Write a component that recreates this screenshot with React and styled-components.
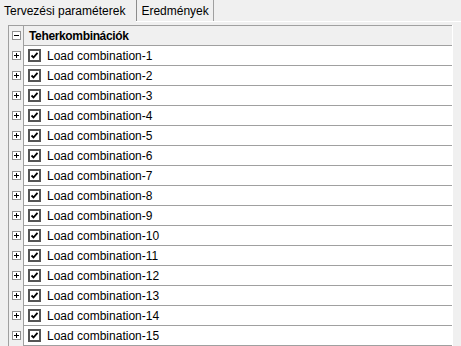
import React from "react";
import styled, { createGlobalStyle } from "styled-components";

const GlobalStyle = createGlobalStyle`
  html, body {
    margin: 0;
    padding: 0;
    overflow: hidden;
    background: #f0f0f0;
  }
  body {
    font-family: "Liberation Sans", Arial, sans-serif;
    font-size: 12px;
    color: #000;
  }
`;

const Window = styled.div`
  width: 461px;
  height: 346px;
  display: flex;
  flex-direction: column;
  background: #f0f0f0;
`;

const TabStrip = styled.div`
  display: flex;
  height: 21px;
  border-bottom: 1px solid #ffffff;
`;

const Tab = styled.div`
  box-sizing: border-box;
  height: ${(p) => (p.$active ? "22px" : "21px")};
  padding: 0 ${(p) => (p.$active ? "11px" : "4px")} 0 4px;
  display: flex;
  align-items: center;
  background: #f0f0f0;
  border-left: ${(p) => (p.$active ? "none" : "1px solid #8c8c8c")};
  border-right: ${(p) => (p.$active ? "none" : "1px solid #a0a0a0")};
  white-space: nowrap;
`;

const Panel = styled.div`
  flex: 1;
  display: flex;
  padding: 3px 8px 0 8px;
  min-height: 0;
`;

const Tree = styled.div`
  flex: 1;
  display: flex;
  flex-direction: column;
  border-left: 1px solid #a0a0a0;
  border-right: 1px solid #ffffff;
  overflow: hidden;
`;

const HeaderRow = styled.div`
  display: flex;
  height: 20px;
  flex-shrink: 0;
  border-top: 1px solid #a0a0a0;
  box-sizing: border-box;
`;

const Row = styled.div`
  display: flex;
  height: ${(p) => (p.$last ? "21px" : "20px")};
  flex-shrink: 0;
`;

const Gutter = styled.div`
  width: 15px;
  flex-shrink: 0;
  display: flex;
  align-items: center;
  padding-left: 3px;
  box-sizing: border-box;
  border-right: 1px solid #a0a0a0;
  background: #f0f0f0;
`;

const HeaderCell = styled.div`
  flex: 1;
  display: flex;
  align-items: center;
  padding-left: 5px;
  font-weight: bold;
  letter-spacing: -0.35px;
  background: #f0f0f0;
`;

const Cell = styled.div`
  flex: 1;
  display: flex;
  align-items: center;
  gap: 6px;
  padding-left: 4px;
  box-sizing: border-box;
  background: #ffffff;
  border-top: 1px solid #a0a0a0;
  border-bottom: ${(p) => (p.$last ? "1px solid #a0a0a0" : "none")};
`;

const Expander = styled.div`
  width: 9px;
  height: 9px;
  box-sizing: border-box;
  border: 1px solid #919191;
  background: #ffffff;
  display: flex;
  align-items: center;
  justify-content: center;
`;

const CheckBox = styled.div`
  width: 13px;
  height: 13px;
  box-sizing: border-box;
  border: 2px solid #555555;
  background: #ffffff;
  display: flex;
  align-items: center;
  justify-content: center;
`;

function ExpandIcon({ open }) {
  return (
    <Expander>
      <svg width="7" height="7" viewBox="0 0 7 7">
        <rect x="1" y="3" width="5" height="1" fill="#000" />
        {!open && <rect x="3" y="1" width="1" height="5" fill="#000" />}
      </svg>
    </Expander>
  );
}

function Check() {
  return (
    <CheckBox>
      <svg width="9" height="9" viewBox="0 0 9 9">
        <path d="M1.5 4.5 L3.5 6.5 L7.5 1.8" fill="none" stroke="#000" strokeWidth="1.8" />
      </svg>
    </CheckBox>
  );
}

const combos = Array.from({ length: 15 }, (_, i) => `Load combination-${i + 1}`);

export default function App() {
  return (
    <Window>
      <GlobalStyle />
      <TabStrip>
        <Tab $active>Tervezési paraméterek</Tab>
        <Tab>Eredmények</Tab>
      </TabStrip>
      <Panel>
        <Tree>
          <HeaderRow>
            <Gutter>
              <ExpandIcon open />
            </Gutter>
            <HeaderCell>Teherkombinációk</HeaderCell>
          </HeaderRow>
          {combos.map((name, i) => {
            const last = i === combos.length - 1;
            return (
              <Row key={name} $last={last}>
                <Gutter>
                  <ExpandIcon />
                </Gutter>
                <Cell $last={last}>
                  <Check />
                  {name}
                </Cell>
              </Row>
            );
          })}
        </Tree>
      </Panel>
    </Window>
  );
}
